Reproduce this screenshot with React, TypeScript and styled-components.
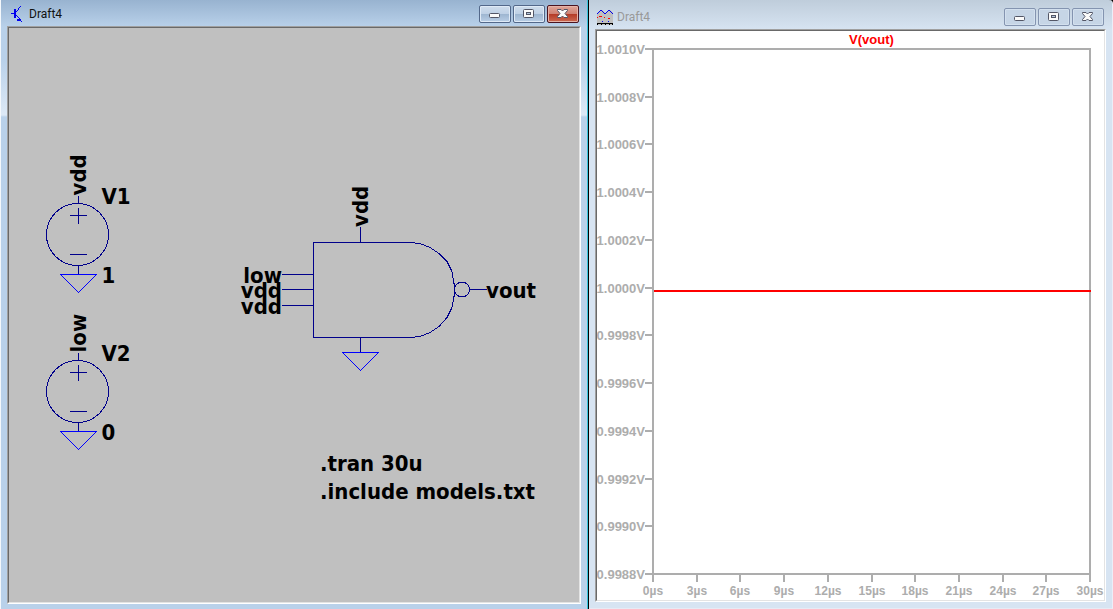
import React, { useLayoutEffect, useRef, useState } from "react";
import styled, { createGlobalStyle, css } from "styled-components";

const GlobalStyle = createGlobalStyle`
  *, *::before, *::after { box-sizing: border-box; }
  body { margin: 0; background: #000; }
`;

const Desktop = styled.main`
  display: grid;
  grid-template-columns: minmax(0, 588fr) minmax(0, 524fr);
  column-gap: 1px;
  min-height: 100vh;
`;

const Window = styled.section<{ $active?: boolean }>`
  display: flex;
  flex-direction: column;
  min-width: 0;
  ${(p) =>
    p.$active
      ? css`
          padding: 0 6px 5px 6px;
          border-left: 1px solid #f4f8fc;
          border-right: 1px solid #35c4dc;
          background: linear-gradient(
            #98b3d0 0,
            #b9d1ea 27px,
            #b9d1ea 60px,
            #dde9f6 115px,
            #b9d1ea 117px
          );
        `
      : css`
          padding: 0 6px 6px 6px;
          border-right: 1px solid #eceef8;
          border-bottom: 1px solid #e6eaf4;
          border-top-right-radius: 4px;
          background: linear-gradient(#bfcddb 0, #d7e4f2 30px);
        `}
`;

const TitleBar = styled.header<{ $active?: boolean }>`
  display: flex;
  align-items: center;
  gap: 4px;
  height: ${(p) => (p.$active ? 26 : 29)}px;
  padding: ${(p) => (p.$active ? "2px 2px 0 2px" : "5px 2px 0 2px")};
`;

const Title = styled.h1<{ $active?: boolean }>`
  flex: 1;
  margin: 0;
  font: 400 12px/16px Roboto, "Open Sans", sans-serif;
  color: ${(p) => (p.$active ? "#111" : "#999")};
`;

const Controls = styled.div`
  display: flex;
  gap: 2px;
`;

const ControlButton = styled.button<{ $look: "active" | "close" | "idle" }>`
  display: flex;
  align-items: center;
  justify-content: center;
  width: 32px;
  height: 18px;
  padding: 0;
  border: 1px solid;
  border-radius: 2px;
  ${(p) =>
    p.$look === "active" &&
    css`
      border-color: #53688a;
      background: linear-gradient(#cfddec 0, #bfd1e6 48%, #9db5d0 50%, #b9cee6 100%);
      box-shadow: inset 0 0 0 1px #dfeaf6;
    `}
  ${(p) =>
    p.$look === "close" &&
    css`
      border-color: #4a1420;
      background: linear-gradient(#dfa69a 0, #cf8172 48%, #b43a26 50%, #cc6a52 100%);
      box-shadow: inset 0 0 0 1px #e5b3a8;
    `}
  ${(p) =>
    p.$look === "idle" &&
    css`
      border-color: #8494b0;
      background: #c6d5e6;
      box-shadow: inset 0 0 0 1px #d3e0ee;
    `}
`;

const Pane = styled.div<{ $fill: string }>`
  display: flex;
  flex: 1;
  border: 1px solid;
  border-color: #a0a0a0 #fff #fff #a0a0a0;
  background: ${(p) => p.$fill};
`;

const PaneInner = styled.div`
  display: flex;
  flex: 1;
  min-width: 0;
  border: 1px solid;
  border-color: #696969 #e3e3e3 #e3e3e3 #696969;
`;

const Drawing = styled.svg`
  display: block;
  flex: 1;
  width: 100%;
  min-width: 0;
  min-height: 480px;
`;

const SchematicText = styled.text`
  font: 700 22px "DejaVu Sans Condensed", "DejaVu Sans", sans-serif;
  font-stretch: condensed;
  fill: #000;
`;

const ChartText = styled.text<{ $size: number; $trace?: boolean }>`
  font: 700 ${(p) => p.$size}px "Liberation Sans", Arial, sans-serif;
  fill: ${(p) => (p.$trace ? "#f00" : "#adadad")};
`;

function TransistorIcon() {
  return (
    <svg width="16" height="18" viewBox="0 0 16 18" fill="#0000f0" shapeRendering="crispEdges" aria-hidden="true">
      <path d="M2 8h3v1H2zM5 4h2v9H5z" />
      <path d="M7 6h1v1H7zM8 5h1v1H8zM9 3h1v2H9zM10 2h1v1h-1zM11 1h1v1h-1z" />
      <path d="M7 10h1v1H7zM8 11h1v1H8zM9 12h1v1H9zM10 13h1v1h-1zM11 14h1v1h-1zM12 16h1v1h-1z" />
      <path d="M8 14h2v-1h1v1h1v2h-4z" />
    </svg>
  );
}

function PlotIcon() {
  return (
    <svg width="16" height="16" viewBox="0 0 16 16" shapeRendering="crispEdges" aria-hidden="true">
      <path d="M0 4L3 1h2l3 3 3-3h2l3 3v12H0z" fill="#c0c0c0" />
      <path d="M0 4h1v1H0zM1 3h1v1H1zM2 2h1v1H2zM3 1h2v1H3zM5 2h1v1H5zM6 3h1v1H6zM7 4h2v1H7zM9 3h1v1H9zM10 2h1v1h-1zM11 1h2v1h-2zM13 2h1v1h-1zM14 3h1v1h-1zM15 4h1v1h-1z" fill="#0000f0" />
      <path d="M2 7h3v1H2zM7 8h1v1H7zM11 9h2v1h-2zM0 8h1v1H0z" fill="#f00" />
      <path d="M5 12h1v1H5zM11 12h1v1h-1z" fill="#0000f0" />
      <path d="M0 14h16v1H0zM0 15h1v1H0zM4 15h1v1H4zM8 15h1v1H8zM12 15h1v1h-1zM15 15h1v1h-1z" fill="#000" />
    </svg>
  );
}

function MinimizeGlyph() {
  return (
    <svg width="12" height="10" viewBox="0 0 12 10" aria-hidden="true">
      <rect x="0.5" y="4.5" width="10" height="4" rx="1" fill="#fafafa" stroke="#535666" />
    </svg>
  );
}

function MaximizeGlyph() {
  return (
    <svg width="12" height="10" viewBox="0 0 12 10" aria-hidden="true">
      <rect x="0.5" y="0.5" width="10" height="8" rx="1" fill="#fafafa" stroke="#535666" />
      <rect x="3.5" y="3.5" width="4" height="2" fill="#b4c8de" stroke="#535666" />
    </svg>
  );
}

function CloseGlyph() {
  return (
    <svg width="12" height="10" viewBox="0 0 12 10" aria-hidden="true">
      <path
        d="M.5.5H4L5.5 2 7 .5h3.5v1L8 4.5l2.5 3v1H7L5.5 7 4 8.5H.5v-1L3 4.5.5 1.5z"
        fill="#fafafa"
        stroke="#535666"
        strokeLinejoin="round"
      />
    </svg>
  );
}

function WindowControls({ active }: { active?: boolean }) {
  return (
    <Controls>
      <ControlButton $look={active ? "active" : "idle"} aria-label="Minimize">
        <MinimizeGlyph />
      </ControlButton>
      <ControlButton $look={active ? "active" : "idle"} aria-label="Maximize">
        <MaximizeGlyph />
      </ControlButton>
      <ControlButton $look={active ? "close" : "idle"} aria-label="Close">
        <CloseGlyph />
      </ControlButton>
    </Controls>
  );
}

const NAVY = "#00008b";

function Ground({ x, y }: { x: number; y: number }) {
  return <path d={`M${x - 18} ${y}h36l-18 18z`} stroke="#0000ff" />;
}

function NetLabel({ x, y, children }: { x: number; y: number; children: string }) {
  return (
    <SchematicText transform={`translate(${x} ${y}) rotate(-90)`} stroke="none">
      {children}
    </SchematicText>
  );
}

function VoltageSource({ x, y, net, name, value }: { x: number; y: number; net: string; name: string; value: string }) {
  return (
    <g>
      <circle cx={x - 1} cy={y} r={31} />
      <path d={`M${x} ${y - 39}v8M${x - 9} ${y - 19}h17M${x} ${y - 27}v16M${x - 9} ${y + 20}h17M${x} ${y + 31}v9`} />
      <Ground x={x} y={y + 40} />
      <NetLabel x={x + 7} y={y - 39}>{net}</NetLabel>
      <SchematicText x={x + 23} y={y - 31} stroke="none">{name}</SchematicText>
      <SchematicText x={x + 23} y={y + 48} stroke="none">{value}</SchematicText>
    </g>
  );
}

const inputs = [
  { net: "low", y: 246.5 },
  { net: "vdd", y: 261.5 },
  { net: "vdd", y: 277.5 },
];

function Schematic() {
  return (
    <Drawing role="img" aria-label="Schematic" fill="none" stroke={NAVY} shapeRendering="crispEdges">
      <VoltageSource x={69.5} y={206.5} net="vdd" name="V1" value="1" />
      <VoltageSource x={69.5} y={363.5} net="low" name="V2" value="0" />

      <path d="M304.5 214.5H401l10 1 10 4 9 6 8 8 5 10 2 12v13l-2 11-5 10-8 9-9 6-10 4-10 1H304.5z" />
      <path d="M351.5 199v15M351.5 309v15M461 261.5h17" />
      <circle cx={453} cy={261.5} r={7.5} />
      <Ground x={351.5} y={324.5} />
      <NetLabel x={359} y={199}>vdd</NetLabel>
      {inputs.map((pin) => (
        <g key={pin.y}>
          <path d={`M273 ${pin.y}h31`} />
          <SchematicText x={273} y={pin.y + 8} textAnchor="end" stroke="none">{pin.net}</SchematicText>
        </g>
      ))}
      <SchematicText x={477} y={270} stroke="none">vout</SchematicText>

      <SchematicText x={311} y={443} stroke="none">.tran 30u</SchematicText>
      <SchematicText x={311} y={471} stroke="none">.include models.txt</SchematicText>
    </Drawing>
  );
}

const volts = Array.from({ length: 12 }, (_, i) => (1.001 - i * 0.0002).toFixed(4) + "V");
const times = Array.from({ length: 11 }, (_, i) => `${i * 3}µs`);

function Waveform() {
  const ref = useRef<SVGSVGElement>(null);
  const [size, setSize] = useState({ w: 507, h: 569 });

  useLayoutEffect(() => {
    const node = ref.current;
    if (!node) return;
    const measure = () => {
      const box = node.getBoundingClientRect();
      setSize({ w: Math.round(box.width), h: Math.round(box.height) });
    };
    measure();
    const observer = new ResizeObserver(measure);
    observer.observe(node);
    return () => observer.disconnect();
  }, []);

  const left = 56;
  const top = 18;
  const right = size.w - 14;
  const bottom = size.h - 26;
  const yAt = (i: number) => Math.round(top + ((bottom - top) * i) / (volts.length - 1));
  const xAt = (i: number) => Math.round(left + ((right - left) * i) / (times.length - 1));
  const traceY = Math.round(top + ((1.001 - 0.999987) / 0.0022) * (bottom - top));

  return (
    <Drawing ref={ref} role="img" aria-label="Waveform" shapeRendering="crispEdges">
      <rect x={left} y={top} width={right - left} height={bottom - top} fill="none" stroke="#adadad" strokeWidth={2} />
      {volts.map((label, i) => (
        <g key={label}>
          <path d={`M${left - 8} ${yAt(i)}h8`} stroke="#adadad" strokeWidth={2} />
          <ChartText $size={13} x={left - 8} y={yAt(i) + 5} textAnchor="end">{label}</ChartText>
        </g>
      ))}
      {times.map((label, i) => (
        <g key={label}>
          <path d={`M${xAt(i)} ${bottom}v8`} stroke="#adadad" strokeWidth={2} />
          <ChartText $size={12} x={xAt(i)} y={bottom + 21} textAnchor="middle">{label}</ChartText>
        </g>
      ))}
      <path d={`M${left + 1} ${traceY}H${right + 1}`} stroke="#f00" strokeWidth={2} />
      <ChartText $size={13} $trace x={(left + right) / 2} y={13} textAnchor="middle">V(vout)</ChartText>
    </Drawing>
  );
}

export default function App() {
  return (
    <>
      <GlobalStyle />
      <Desktop>
        <Window $active>
          <TitleBar $active>
            <TransistorIcon />
            <Title $active>Draft4</Title>
            <WindowControls active />
          </TitleBar>
          <Pane $fill="#c0c0c0">
            <PaneInner>
              <Schematic />
            </PaneInner>
          </Pane>
        </Window>
        <Window>
          <TitleBar>
            <PlotIcon />
            <Title>Draft4</Title>
            <WindowControls />
          </TitleBar>
          <Pane $fill="#fff">
            <PaneInner>
              <Waveform />
            </PaneInner>
          </Pane>
        </Window>
      </Desktop>
    </>
  );
}
